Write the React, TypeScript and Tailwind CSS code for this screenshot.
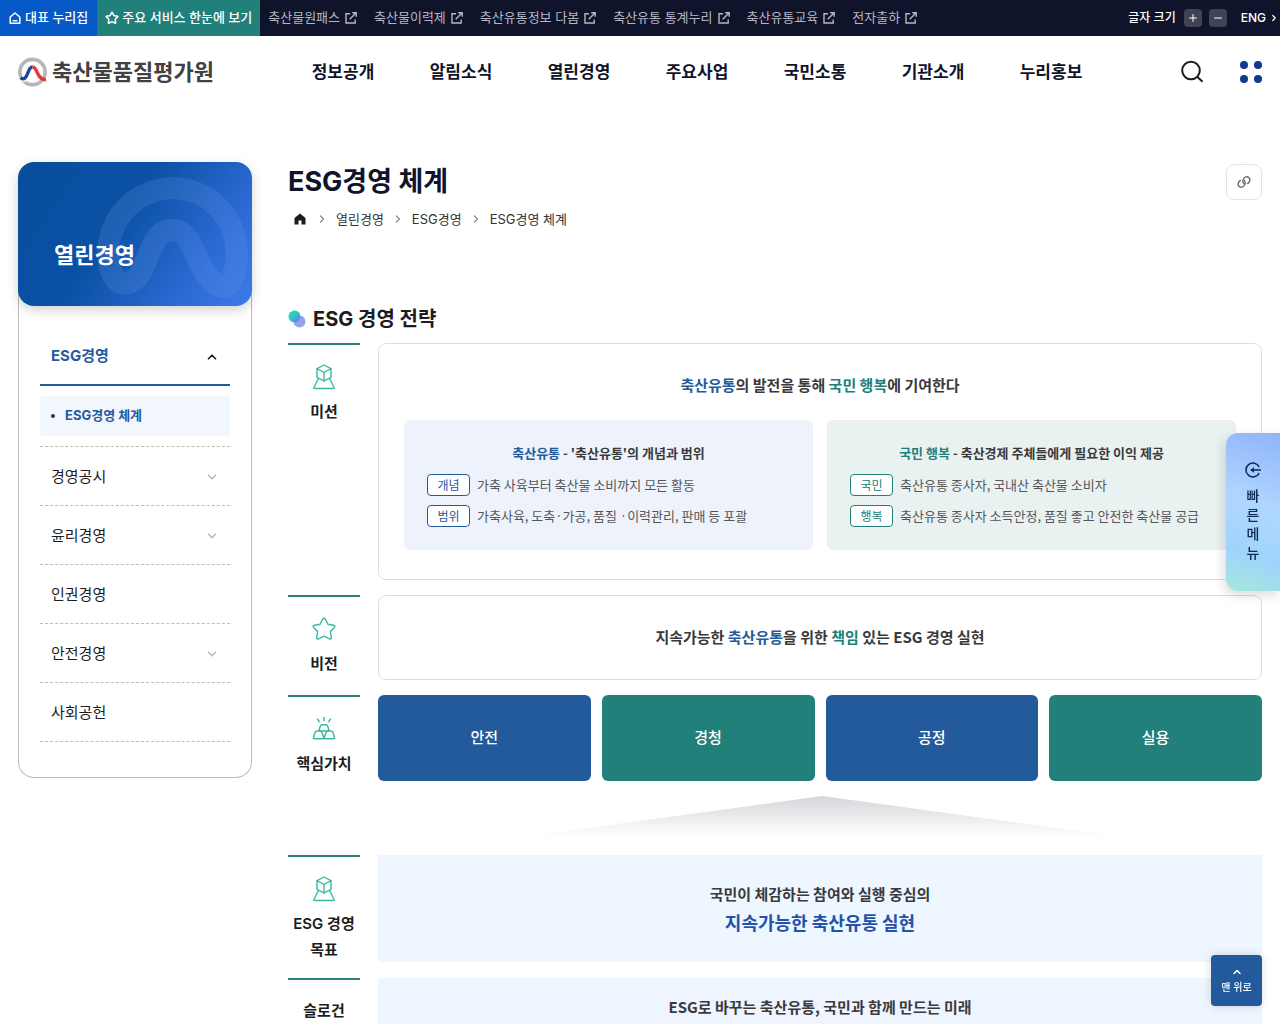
import React from "react";
import { ChevronDown, ChevronRight, ChevronUp, Minus, Plus, Star } from "lucide-react";

const externalLinks = ["축산물원패스", "축산물이력제", "축산유통정보 다봄", "축산유통 통계누리", "축산유통교육", "전자출하"];
const menu = ["정보공개", "알림소식", "열린경영", "주요사업", "국민소통", "기관소개", "누리홍보"];
const sideItems = [
  { label: "경영공시", expandable: true },
  { label: "윤리경영", expandable: true },
  { label: "인권경영", expandable: false },
  { label: "안전경영", expandable: true },
  { label: "사회공헌", expandable: false },
];
const values = [
  { label: "안전", tone: "bg-[#235a9c]" },
  { label: "경청", tone: "bg-[#22807a]" },
  { label: "공정", tone: "bg-[#235a9c]" },
  { label: "실용", tone: "bg-[#22807a]" },
];

function HomeOutline() {
  return (
    <svg className="size-3" viewBox="0 0 12 12" fill="none" stroke="currentColor" strokeWidth="1.5" strokeLinejoin="round" strokeLinecap="round" aria-hidden="true">
      <path d="M1.2 5 6 1l4.800 4v6.200H1.200Z" />
      <path d="M4.200 8.800h3.600" />
    </svg>
  );
}

function OpenOut() {
  return (
    <svg className="size-3 shrink-0" viewBox="0 0 12 12" fill="none" stroke="currentColor" strokeWidth="1.400" aria-hidden="true">
      <path d="M5 1.800H1v9.200h9.200V7.500M7.200.800h4v4M11 1 4.700 7.300" />
    </svg>
  );
}

function LogoMark() {
  return (
    <svg className="size-[30px] shrink-0" viewBox="0 0 30 30" fill="none" aria-hidden="true">
      <circle cx="14.500" cy="15" r="12.600" stroke="#b5b6b9" strokeWidth="3.600" />
      <path d="M3 19.500C6 24.500 8.600 20 10 16c1.300-4 2.500-6.300 4.500-6.300" stroke="#fff" strokeWidth="6" />
      <path d="M2.500 20.500C6.200 24 8.400 20 9.800 16c1.300-3.800 2.500-6 4.700-6" stroke="#17479e" strokeWidth="3.400" />
      <path d="M14.500 10c2.400 0 3.600 2.600 5 6 1.500 3.800 4 6.800 8.500 6.800" stroke="#e8392b" strokeWidth="3.400" />
    </svg>
  );
}

function CubeIcon() {
  return (
    <svg className="size-7" viewBox="0 0 28 28" fill="none" stroke="#3bb8a0" strokeWidth="1.400" strokeLinejoin="round" strokeLinecap="round" aria-hidden="true">
      <path d="m14 2 7 3.600v8.800L14 18l-7-3.600V5.600Z" />
      <path d="m7 5.600 7 3.900 7-3.900M14 9.500V18" />
      <path d="M8.600 15.300 4 24.200q-.4 1.300.800 1.300h18.400q1.200 0 .8-1.300l-4.600-8.900" />
    </svg>
  );
}

function StarIcon() {
  return (
    <svg className="size-7" viewBox="0 0 28 28" fill="none" stroke="#3bb8a0" strokeWidth="1.400" strokeLinejoin="round" aria-hidden="true">
      <path d="M12.600 4.200q1.400-2 2.800 0l2.500 5.100 5.700.9q2 .6.800 2.200l-4 4.200.9 5.900q0 2-1.900 1.300L14 21.200l-5.400 2.600q-1.900.7-1.900-1.300l.9-5.900-4-4.200q-1.200-1.600.8-2.200l5.700-.9Z" />
    </svg>
  );
}

function IngotIcon() {
  return (
    <svg className="size-7" viewBox="0 0 28 28" fill="none" stroke="#3bb8a0" strokeWidth="1.400" strokeLinejoin="round" strokeLinecap="round" aria-hidden="true">
      <path d="M14 2.500v3.200M7.500 4l1.800 2.800M20.500 4l-1.800 2.800" />
      <path d="m8.800 16 1.600-5q.4-1.200 1.600-1.200h4q1.200 0 1.600 1.200l1.600 5" />
      <path d="M3.400 22.800 5.200 17.200q.4-1.200 1.600-1.200h3.400q1.200 0 1.600 1.200l2.200 5.900q0 .7-.8.700H4.200q-1 0-.8-1Z" />
      <path d="m24.600 22.800-1.800-5.600Q22.400 16 21.200 16h-3.400q-1.200 0-1.600 1.200L14 23.100q0 .7.800.7h9q1 0 .8-1Z" />
      <path d="M10.500 16h7" />
    </svg>
  );
}

function Row({ label, icon, children }: { label: React.ReactNode; icon?: React.ReactNode; children: React.ReactNode }) {
  return (
    <div className="flex gap-[18px]">
      <h3 className="flex w-[72px] shrink-0 flex-col items-center gap-2 border-t-2 border-[#2d7f7b] pt-[18px] text-center text-[15px] leading-[26px] font-semibold text-[#1d1d1f]">
        {icon}
        <span>{label}</span>
      </h3>
      <div className="flex min-w-0 grow flex-col">{children}</div>
    </div>
  );
}

type Detail = { tag: string; text: string };

function DetailCard({ green, keyword, title, details }: { green?: boolean; keyword: string; title: string; details: Detail[] }) {
  return (
    <section className={`flex-1 rounded-md px-[23px] pt-[21px] pb-[23px] font-['Noto_Sans_CJK_KR',sans-serif] ${green ? "bg-[#eaf2f1]" : "bg-[#eef2fa]"}`}>
      <h4 className="text-center text-[13px] leading-6 font-bold text-[#3a3a3d]">
        <span className={green ? "text-[#22807a]" : "text-[#235a9c]"}>{keyword}</span> - {title}
      </h4>
      <dl className="mt-[9px] flex flex-col gap-[9px]">
        {details.map((d) => (
          <div key={d.tag} className="flex items-center gap-[7px]">
            <dt className={`flex h-[22px] w-[43px] shrink-0 items-center justify-center rounded border bg-white text-xs ${green ? "border-[#22807a] text-[#22807a]" : "border-[#235a9c] text-[#235a9c]"}`}>{d.tag}</dt>
            <dd className="text-[13px] leading-[22px] whitespace-nowrap text-[#55565a]">{d.text}</dd>
          </div>
        ))}
      </dl>
    </section>
  );
}

export default function App() {
  return (
    <div className="min-h-screen bg-white font-[Inter,'Noto_Sans_CJK_KR',sans-serif] text-[#1d1d1f]">
      <div className="flex h-9 items-center bg-[#10142b] text-[13px] whitespace-nowrap text-[#b4b7c3]">
        <a href="#home" className="flex h-full items-center gap-1 bg-[#0659c7] px-[9px] font-medium text-white">
          <HomeOutline />
          대표 누리집
        </a>
        <a href="#services" className="flex h-full items-center gap-[3px] bg-[#22807a] px-2 font-medium text-white">
          <Star className="size-3.5" strokeWidth={2.6} />
          주요 서비스 한눈에 보기
        </a>
        <nav className="flex items-center gap-[17px] pl-2" aria-label="관련 사이트">
          {externalLinks.map((l) => (
            <a key={l} href="#link" className="flex items-center gap-[5px]">
              {l}
              <OpenOut />
            </a>
          ))}
        </nav>
        <div className="ml-auto flex items-center pr-px text-xs font-medium text-white">
          <span className="mr-2">글자 크기</span>
          <button aria-label="글자 크게" className="mr-[7px] flex size-[18px] items-center justify-center rounded bg-[#3f4355]"><Plus className="size-3" /></button>
          <button aria-label="글자 작게" className="mr-3.5 flex size-[18px] items-center justify-center rounded bg-[#3f4355]"><Minus className="size-3" /></button>
          <a href="#eng" className="flex items-center gap-[3px]">ENG <ChevronRight className="size-2.5" strokeWidth={3} /></a>
        </div>
      </div>

      <header className="flex h-[72px] items-center px-[18px]">
        <a href="#main" className="flex w-[266px] shrink-0 items-center gap-1 text-[22px] font-bold whitespace-nowrap text-[#414042]">
          <LogoMark />
          축산물품질평가원
        </a>
        <nav className="grid max-w-[826px] grow grid-cols-7 pt-0.5 text-center text-[17px] font-bold whitespace-nowrap text-[#10142b]" aria-label="주 메뉴">
          {menu.map((m) => <a key={m} href="#menu">{m}</a>)}
        </nav>
        <div className="ml-auto flex items-center gap-9">
          <button aria-label="검색">
            <svg className="size-6" viewBox="0 0 24 24" fill="none" stroke="#1d1d1f" strokeWidth="2" aria-hidden="true"><circle cx="11" cy="10.500" r="8.800" /><path d="m17.200 16.800 5.300 5" /></svg>
          </button>
          <button aria-label="전체 메뉴" className="grid grid-cols-2 gap-1.5">
            {[0, 1, 2, 3].map((i) => <span key={i} className="size-2 rounded-full bg-[#103a8f]" />)}
          </button>
        </div>
      </header>

      <div className="flex items-start gap-9 px-[18px] pt-[54px]">
        <aside className="w-[234px] shrink-0">
          <div className="relative flex h-36 items-end overflow-hidden rounded-2xl bg-[linear-gradient(125deg,#084e9e_0%,#0a51a4_42%,#2c6bd6_78%,#3d7be6_100%)] shadow-[0_4px_12px_rgba(0,0,0,0.18)]">
            <svg className="absolute inset-0 size-full" viewBox="0 0 234 144" fill="none" stroke="#6ea0ea" strokeOpacity="0.2" strokeWidth="22" strokeLinejoin="round" aria-hidden="true">
              <path d="M90 92A64.500 66 0 1 1 216 112C212 134 194 126 181 100 172 80 168 68 154 68 139 68 134 84 126 104 114 132 91 126 90 92Z" />
            </svg>
            <h2 className="relative pb-[33px] pl-9 text-[22px] leading-9 font-bold text-white">열린경영</h2>
          </div>
          <nav className="-mt-5 rounded-b-2xl border border-t-0 border-[#bdbdbd] px-[21px] pt-[41px] pb-[35px] text-[15px]" aria-label="열린경영">
            <button aria-expanded="true" className="flex h-[59px] w-full items-center justify-between border-b-2 border-[#235a9c] px-[11px] pt-0.5 font-bold text-[#235a9c]">
              ESG경영
              <ChevronUp className="size-3.5 text-[#1d1d1f]" strokeWidth={3} />
            </button>
            <div className="border-b border-dashed border-[#bdbdbd] py-2.5">
              <a href="#system" className="flex h-10 items-center gap-2.5 rounded bg-[#f2f7fe] px-[11px] text-[13px] font-bold text-[#235a9c]">
                <span className="size-1 rounded-full bg-[#333]" />
                ESG경영 체계
              </a>
            </div>
            {sideItems.map((s) => (
              <a key={s.label} href="#side" className="flex h-[59px] items-center justify-between border-b border-dashed border-[#bdbdbd] px-[11px] pt-0.5">
                {s.label}
                {s.expandable && <ChevronDown className="size-3.5 text-[#bdbdbd]" strokeWidth={3} />}
              </a>
            ))}
          </nav>
        </aside>

        <main className="min-w-0 grow">
          <div className="flex items-start justify-between">
            <div>
              <h1 className="text-[27px] leading-10 font-bold text-[#10142b]">ESG경영 체계</h1>
              <nav className="mt-[5px] flex items-center gap-2 pl-1.5 text-[13px] leading-6 text-[#333]" aria-label="현재 위치">
                <a href="#home" aria-label="홈" className="mr-0.5">
                  <svg className="size-3" viewBox="0 0 12 12" fill="#1d1d1f" aria-hidden="true"><path d="M6 .500 11.500 5v6.500h-4v-4h-3v4h-4V5Z" /></svg>
                </a>
                {["열린경영", "ESG경영", "ESG경영 체계"].map((c) => (
                  <React.Fragment key={c}>
                    <ChevronRight className="size-3 text-[#8a8a8a]" strokeWidth={2.6} />
                    <a href="#crumb">{c}</a>
                  </React.Fragment>
                ))}
              </nav>
            </div>
            <button aria-label="주소 복사" className="mt-0.5 flex size-9 items-center justify-center rounded-lg border border-[#e3e3e3]">
              <svg className="size-3.5" viewBox="0 0 16 16" fill="none" stroke="#666" strokeWidth="1.500" strokeLinecap="round" aria-hidden="true">
                <path d="M8.600 10.300C6.300 9.300 6.200 6.800 7.300 4.900 8.400 2.400 10.800 1.300 12.900 2.400c2 1.200 2.200 3.500 1.100 5.500-.500.900-1.100 1.500-1.900 1.900" />
                <path d="M7.400 5.700c2.300 1 2.400 3.500 1.300 5.400-1.100 2.500-3.500 3.600-5.600 2.500-2-1.200-2.200-3.500-1.100-5.500.500-.9 1.100-1.500 1.900-1.900" />
              </svg>
            </button>
          </div>

          <h2 className="mt-[72px] flex items-center gap-[7px] text-xl leading-[32px] font-bold">
            <svg className="size-[18px]" viewBox="0 0 18 18" aria-hidden="true">
              <defs><linearGradient id="mint" x1="0" y1="0" x2="1" y2="1"><stop stopColor="#2fe0ac" /><stop offset="1" stopColor="#2aa9d8" /></linearGradient></defs>
              <circle cx="6.500" cy="6.500" r="6" fill="url(#mint)" />
              <circle cx="11.500" cy="11.500" r="6" fill="#6d83ea" fillOpacity="0.750" />
            </svg>
            ESG 경영 전략
          </h2>

          <div className="mt-2 flex flex-col gap-[15px]">
            <Row label="미션" icon={<CubeIcon />}>
              <div className="rounded-lg border border-[#dedede] px-[25px] pt-7 pb-[29px]">
                <p className="text-center font-['Noto_Sans_CJK_KR',sans-serif] text-[15px] leading-[26px] font-bold text-[#3a3a3d]">
                  <span className="text-[#235a9c]">축산유통</span>의 발전을 통해 <span className="text-[#22807a]">국민 행복</span>에 기여한다
                </p>
                <div className="mt-[22px] flex gap-3.5">
                  <DetailCard keyword="축산유통" title="'축산유통'의 개념과 범위" details={[{ tag: "개념", text: "가축 사육부터 축산물 소비까지 모든 활동" }, { tag: "범위", text: "가축사육, 도축·가공, 품질 ·이력관리, 판매 등 포괄" }]} />
                  <DetailCard green keyword="국민 행복" title="축산경제 주체들에게 필요한 이익 제공" details={[{ tag: "국민", text: "축산유통 종사자, 국내산 축산물 소비자" }, { tag: "행복", text: "축산유통 종사자 소득안정, 품질 좋고 안전한 축산물 공급" }]} />
                </div>
              </div>
            </Row>
            <Row label="비전" icon={<StarIcon />}>
              <p className="flex h-[85px] items-center justify-center rounded-lg border border-[#dedede] font-['Noto_Sans_CJK_KR',sans-serif] text-[15px] font-bold text-[#3a3a3d]">
                <span>지속가능한 <span className="text-[#235a9c]">축산유통</span>을 위한 <span className="text-[#22807a]">책임</span> 있는 ESG 경영 실현</span>
              </p>
            </Row>
            <Row label="핵심가치" icon={<IngotIcon />}>
              <ul className="grid grid-cols-4 gap-[11px] text-[15px] font-medium text-white">
                {values.map((v) => <li key={v.label} className={`flex h-[86px] items-center justify-center rounded-md ${v.tone}`}>{v.label}</li>)}
              </ul>
            </Row>
            <div className="flex justify-center pb-[3px] pl-[94px]">
              <svg className="h-[41px] w-[600px]" viewBox="0 0 600 41" aria-hidden="true">
                <defs><linearGradient id="fade" x1="0" y1="0" x2="0" y2="1"><stop stopColor="#d5d6d9" /><stop offset="1" stopColor="#fff" /></linearGradient></defs>
                <path d="M300 0 600 41H0Z" fill="url(#fade)" />
              </svg>
            </div>
            <Row label={<>ESG 경영<br />목표</>} icon={<CubeIcon />}>
              <div className="flex h-[107px] flex-col items-center justify-center bg-[#eef6ff] font-['Noto_Sans_CJK_KR',sans-serif] text-[15px] leading-[26px] font-bold text-[#3a3a3d]">
                <p>국민이 체감하는 참여와 실행 중심의</p>
                <p className="text-lg leading-[30px] text-[#2352a8]">지속가능한 축산유통 실현</p>
              </div>
            </Row>
            <Row label="슬로건">
              <p className="flex h-[58px] items-center justify-center bg-[#eef5ff] font-['Noto_Sans_CJK_KR',sans-serif] text-[15px] font-bold text-[#3a3a3d]">ESG로 바꾸는 축산유통, 국민과 함께 만드는 미래</p>
            </Row>
          </div>
        </main>
      </div>

      <button className="fixed top-[433px] right-0 flex h-[158px] w-[54px] flex-col items-center gap-2 rounded-l-xl bg-[linear-gradient(200deg,#8fb4fb_0%,#b0d6ff_45%,#9fd4fd_75%,#a4e8d8_100%)] pt-[29px] text-sm font-medium text-[#10294f] shadow-[-2px_4px_12px_rgba(0,0,0,0.15)]">
        <svg className="size-4 shrink-0" viewBox="0 0 16 16" fill="none" stroke="currentColor" strokeWidth="1.500" aria-hidden="true">
          <path d="M14.200 4.800A7 7 0 1 0 14.200 11.200M16 8H6.500" /><path d="M9 5.200 5.200 8 9 10.800Z" fill="currentColor" stroke="none" />
        </svg>
        <span className="w-3.5 text-center leading-[19px] break-all">빠른메뉴</span>
      </button>
      <a href="#top" className="fixed right-[18px] bottom-[18px] flex size-[51px] flex-col items-center justify-center gap-0.5 rounded bg-[#235a9c] text-[10px] font-medium text-white shadow-[0_0_10px_rgba(0,0,0,0.15)]">
        <ChevronUp className="size-3" strokeWidth={3} />
        맨 위로
      </a>
    </div>
  );
}
